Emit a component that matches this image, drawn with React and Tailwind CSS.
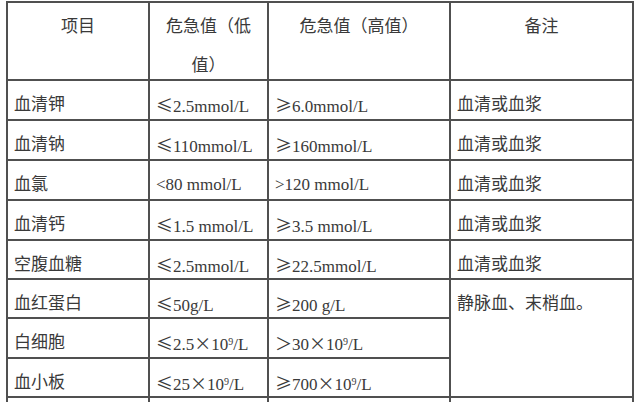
import React from "react";

const cjk = "font-['Noto_Sans_CJK_SC',sans-serif]";

// full-width symbols (≤ ≥ × ＞) come from the CJK font like in the original sheet
const S = ({ children }) => <span className={cjk}>{children}</span>;
const Sup = () => <sup className="text-[10px]">9</sup>;

const rows = [
  ["血清钾", <><S>≤</S>2.5mmol/L</>, <><S>≥</S>6.0mmol/L</>, "血清或血浆"],
  ["血清钠", <><S>≤</S>110mmol/L</>, <><S>≥</S>160mmol/L</>, "血清或血浆"],
  ["血氯", <>&lt;80 mmol/L</>, <>&gt;120 mmol/L</>, "血清或血浆"],
  ["血清钙", <><S>≤</S>1.5 mmol/L</>, <><S>≥</S>3.5 mmol/L</>, "血清或血浆"],
  ["空腹血糖", <><S>≤</S>2.5mmol/L</>, <><S>≥</S>22.5mmol/L</>, "血清或血浆"],
];

const blood = [
  ["血红蛋白", <><S>≤</S>50g/L</>, <><S>≥</S>200 g/L</>],
  ["白细胞", <><S>≤</S>2.5<S>×</S>10<Sup />/L</>, <><S>＞</S>30<S>×</S>10<Sup />/L</>],
  ["血小板", <><S>≤</S>25<S>×</S>10<Sup />/L</>, <><S>≥</S>700<S>×</S>10<Sup />/L</>],
];

const head = "bg-white text-center pt-[4px] leading-[39px]";
const cell = "bg-white pl-[6px] pt-[14px] leading-[20px] whitespace-nowrap";

export default function App() {
  return (
    <div className="w-[640px] h-[402px] overflow-hidden bg-white pl-[6px] pt-[1px] text-[17px] text-[#3a3a3a] font-['Liberation_Serif','Noto_Sans_CJK_SC',serif]">
      <div className="grid w-fit grid-cols-[140px_117px_180px_181px] grid-rows-[76px_38px_38px_38px_38px_37px_37px_38px_37px_40px] gap-[2px] bg-[#505050] p-[2px]">
        <div className={head}>项目</div>
        <div className={head}>
          危急值（低
          <br />
          值）
        </div>
        <div className={head}>危急值（高值）</div>
        <div className={head}>备注</div>

        {rows.map((r, i) => (
          <React.Fragment key={i}>
            {r.map((c, j) => (
              <div key={j} className={cell}>
                {c}
              </div>
            ))}
          </React.Fragment>
        ))}

        {blood.map((r, i) => (
          <React.Fragment key={"b" + i}>
            <div className={cell}>{r[0]}</div>
            <div className={cell}>{r[1]}</div>
            <div className={cell}>{r[2]}</div>
            {i === 0 && <div className={cell + " row-span-3"}>静脉血、末梢血。</div>}
          </React.Fragment>
        ))}

        {/* next row, cut off by the bottom of the window */}
        <div className="bg-white" />
        <div className="bg-white" />
        <div className="bg-white" />
        <div className="bg-white" />
      </div>
    </div>
  );
}
